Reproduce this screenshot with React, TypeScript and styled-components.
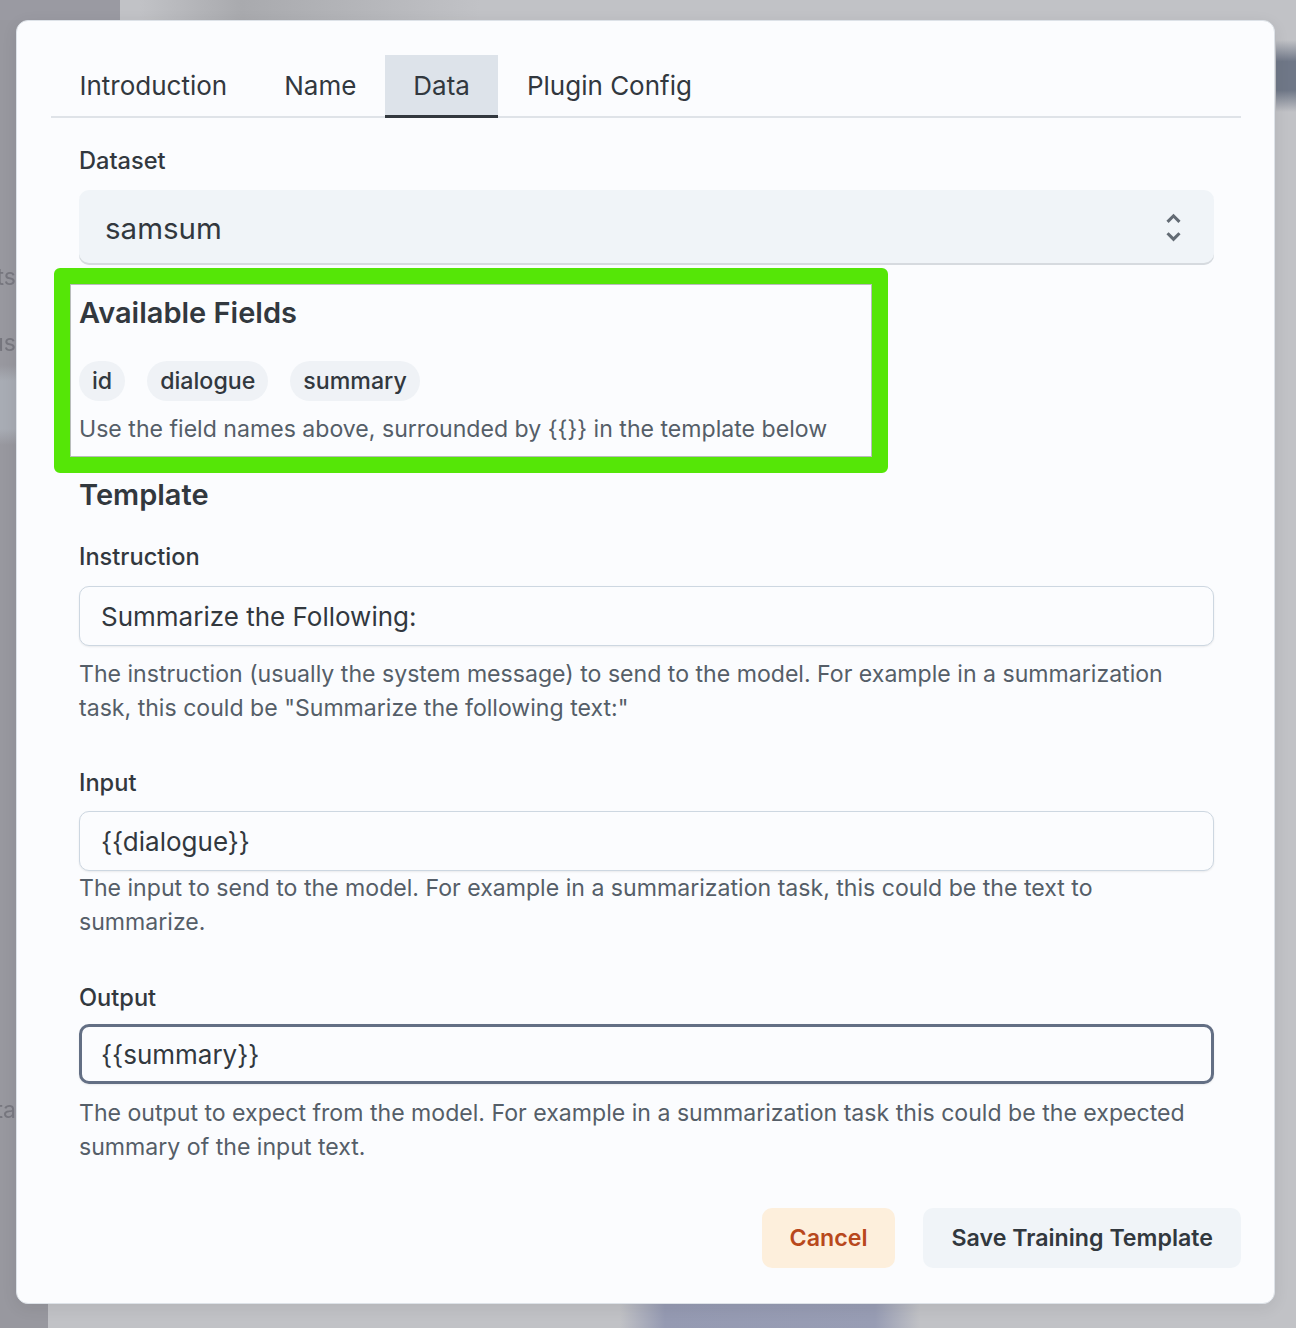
import React from "react";
import styled, { createGlobalStyle } from "styled-components";

const GlobalStyle = createGlobalStyle`
  html, body { margin: 0; padding: 0; }
  body {
    font-family: Inter, "Noto Sans", "Liberation Sans", sans-serif;
    -webkit-font-smoothing: antialiased;
  }
  * { box-sizing: border-box; }
`;

const Page = styled.div`
  width: 1296px;
  height: 1328px;
  overflow: hidden;
  display: flex;
  align-items: flex-start;
  padding-top: 20px;
  background:
    linear-gradient(180deg, rgba(111,119,135,0) 0%, #6f7787 30%, #6f7787 70%, rgba(111,119,135,0) 100%) 1276px 40px / 20px 72px no-repeat,
    linear-gradient(90deg, rgba(140,146,172,0) 0%, #959ab2 15%, #989db4 85%, rgba(140,146,172,0) 100%) 620px 1300px / 300px 28px no-repeat,
    linear-gradient(90deg, rgba(160,160,165,0) 0%, #a9aaae 30%, #b3b4b8 60%, rgba(160,160,165,0) 100%) 140px 0 / 340px 20px no-repeat,
    linear-gradient(180deg, rgba(170,174,182,0) 0%, #a8acb4 20%, #a8acb4 80%, rgba(170,174,182,0) 100%) 0 365px / 48px 80px no-repeat,
    linear-gradient(#9a9aa2, #9a9aa2) 0 0 / 120px 20px no-repeat,
    linear-gradient(90deg, #98989f 0, #98989f 48px, #c1c2c6 48px) 0 0 / 100% 100% no-repeat;
`;

const Sidebar = styled.div`
  width: 16px;
  flex: none;
  overflow: hidden;
  display: flex;
  flex-direction: column;
  color: #76767e;
  font-size: 23px;
  filter: blur(0.6px);
`;

const SideText = styled.span<{ $top: number }>`
  margin-top: ${(p) => p.$top}px;
  white-space: nowrap;
  line-height: 30px;
  direction: rtl;
  text-align: left;
`;

const Dialog = styled.div`
  width: 1259px;
  flex: none;
  background: #fbfcfe;
  border: 1px solid #dde2e8;
  border-radius: 12px;
  box-shadow: 0 4px 16px rgba(21, 21, 21, 0.08);
  padding: 34px 33px 35px 34px;
  display: flex;
  flex-direction: column;
  color: #32383e;
`;

const TabList = styled.div`
  display: flex;
  box-shadow: inset 0 -2px 0 #dfe3e8;
`;

const Tab = styled.div<{ $active?: boolean }>`
  height: 63px;
  padding: 0 28.5px 3px;
  display: flex;
  align-items: center;
  font-size: 26px;
  color: #32383e;
  background: ${(p) => (p.$active ? "#dde3ea" : "transparent")};
  box-shadow: ${(p) => (p.$active ? "inset 0 -3px 0 #32383e" : "none")};
`;

const Panel = styled.div`
  padding: 25px 27px 0 28px;
  display: flex;
  flex-direction: column;
`;

const Field = styled.div<{ $mt?: number }>`
  display: flex;
  flex-direction: column;
  margin-top: ${(p) => p.$mt ?? 0}px;
`;

const Label = styled.div<{ $mb?: number }>`
  font-size: 23.6px;
  line-height: 36px;
  font-weight: 500;
  color: #32383e;
  margin-bottom: ${(p) => p.$mb ?? 11}px;
`;

const SelectBox = styled.div`
  height: 75px;
  background: #f0f4f8;
  border-radius: 10px;
  box-shadow: inset 0 -2px 0 #d6dadf;
  padding: 0 22px 0 26px;
  display: flex;
  align-items: center;
  justify-content: space-between;
  font-size: 29.5px;
  color: #32383e;
`;

const FieldsSection = styled.section`
  position: relative;
  margin: 19px 0 0 -9px;
  width: 802px;
  padding: 10px 0 11px 9px;
  display: flex;
  flex-direction: column;
  &::after {
    content: "";
    position: absolute;
    inset: -16px;
    border: 16px solid #55e607;
    border-radius: 6px;
    box-shadow: inset 0 0 0 1px rgba(60, 70, 60, 0.35);
    pointer-events: none;
  }
`;

const SectionTitle = styled.h2<{ $mt?: number }>`
  margin: ${(p) => p.$mt ?? 0}px 0 0;
  font-size: 29px;
  line-height: 38.6px;
  font-weight: 600;
  color: #32383e;
`;

const ChipRow = styled.div`
  display: flex;
  gap: 22px;
  margin-top: 28px;
`;

const Chip = styled.span`
  height: 40px;
  padding: 0 13px;
  border-radius: 20px;
  background: #eff2f6;
  display: inline-flex;
  align-items: center;
  font-size: 23.2px;
  font-weight: 500;
  color: #32383e;
`;

const Hint = styled.p<{ $mt?: number }>`
  margin: ${(p) => p.$mt ?? 0}px 0 0;
  font-size: 23.1px;
  line-height: 34px;
  color: #555e68;
`;

const TextInput = styled.input<{ $focused?: boolean }>`
  height: 60px;
  width: 100%;
  border: ${(p) => (p.$focused ? "3px solid #636f84" : "1px solid #cdd7e1")};
  border-radius: 10px;
  background: #fbfcfe;
  box-shadow: 0 1px 2px rgba(21, 21, 21, 0.08);
  padding: 0 ${(p) => (p.$focused ? 19 : 21)}px;
  font-family: Inter, "Noto Sans", "Liberation Sans", sans-serif;
  font-size: 26px;
  color: #32383e;
  outline: none;
`;

const Actions = styled.div`
  display: flex;
  justify-content: flex-end;
  gap: 28px;
  margin-top: 44px;
`;

const Button = styled.button<{ $tone: "warning" | "neutral" }>`
  height: 60px;
  padding: 0 28px;
  border: none;
  border-radius: 10px;
  font-family: Inter, "Noto Sans", "Liberation Sans", sans-serif;
  font-size: 23.2px;
  font-weight: 600;
  background: ${(p) => (p.$tone === "warning" ? "#fdefdc" : "#f0f4f8")};
  color: ${(p) => (p.$tone === "warning" ? "#b8481c" : "#32383e")};
`;

const UnfoldIcon = () => (
  <svg width="37" height="37" viewBox="0 0 24 24" fill="#636b74" aria-hidden>
    <path d="M12 5.83 15.17 9l1.41-1.41L12 3 7.41 7.59 8.83 9zm0 12.34L8.83 15l-1.41 1.41L12 21l4.59-4.59L15.17 15z" />
  </svg>
);

export default function App() {
  return (
    <>
      <GlobalStyle />
      <Page>
        <Sidebar>
          <SideText $top={242}>Datasets</SideText>
          <SideText $top={36}>Models us</SideText>
          <SideText $top={737}>Data ta</SideText>
        </Sidebar>
        <Dialog>
          <TabList>
            <Tab>Introduction</Tab>
            <Tab>Name</Tab>
            <Tab $active>Data</Tab>
            <Tab>Plugin Config</Tab>
          </TabList>
          <Panel>
            <Field>
              <Label>Dataset</Label>
              <SelectBox>
                <span>samsum</span>
                <UnfoldIcon />
              </SelectBox>
            </Field>
            <FieldsSection>
              <SectionTitle>Available Fields</SectionTitle>
              <ChipRow>
                <Chip>id</Chip>
                <Chip>dialogue</Chip>
                <Chip>summary</Chip>
              </ChipRow>
              <Hint $mt={11}>
                Use the field names above, surrounded by {"{{}}"} in the template below
              </Hint>
            </FieldsSection>
            <SectionTitle $mt={19}>Template</SectionTitle>
            <Field $mt={25}>
              <Label>Instruction</Label>
              <TextInput readOnly value="Summarize the Following:" />
              <Hint $mt={11}>
                The instruction (usually the system message) to send to the model. For example in a summarization task, this could be "Summarize the following text:"
              </Hint>
            </Field>
            <Field $mt={40}>
              <Label $mb={10}>Input</Label>
              <TextInput readOnly value="{{dialogue}}" />
              <Hint $mt={0}>
                The input to send to the model. For example in a summarization task, this could be the text to summarize.
              </Hint>
            </Field>
            <Field $mt={41}>
              <Label $mb={8}>Output</Label>
              <TextInput readOnly $focused value="{{summary}}" />
              <Hint $mt={12}>
                The output to expect from the model. For example in a summarization task this could be the expected summary of the input text.
              </Hint>
            </Field>
          </Panel>
          <Actions>
            <Button $tone="warning">Cancel</Button>
            <Button $tone="neutral">Save Training Template</Button>
          </Actions>
        </Dialog>
      </Page>
    </>
  );
}
